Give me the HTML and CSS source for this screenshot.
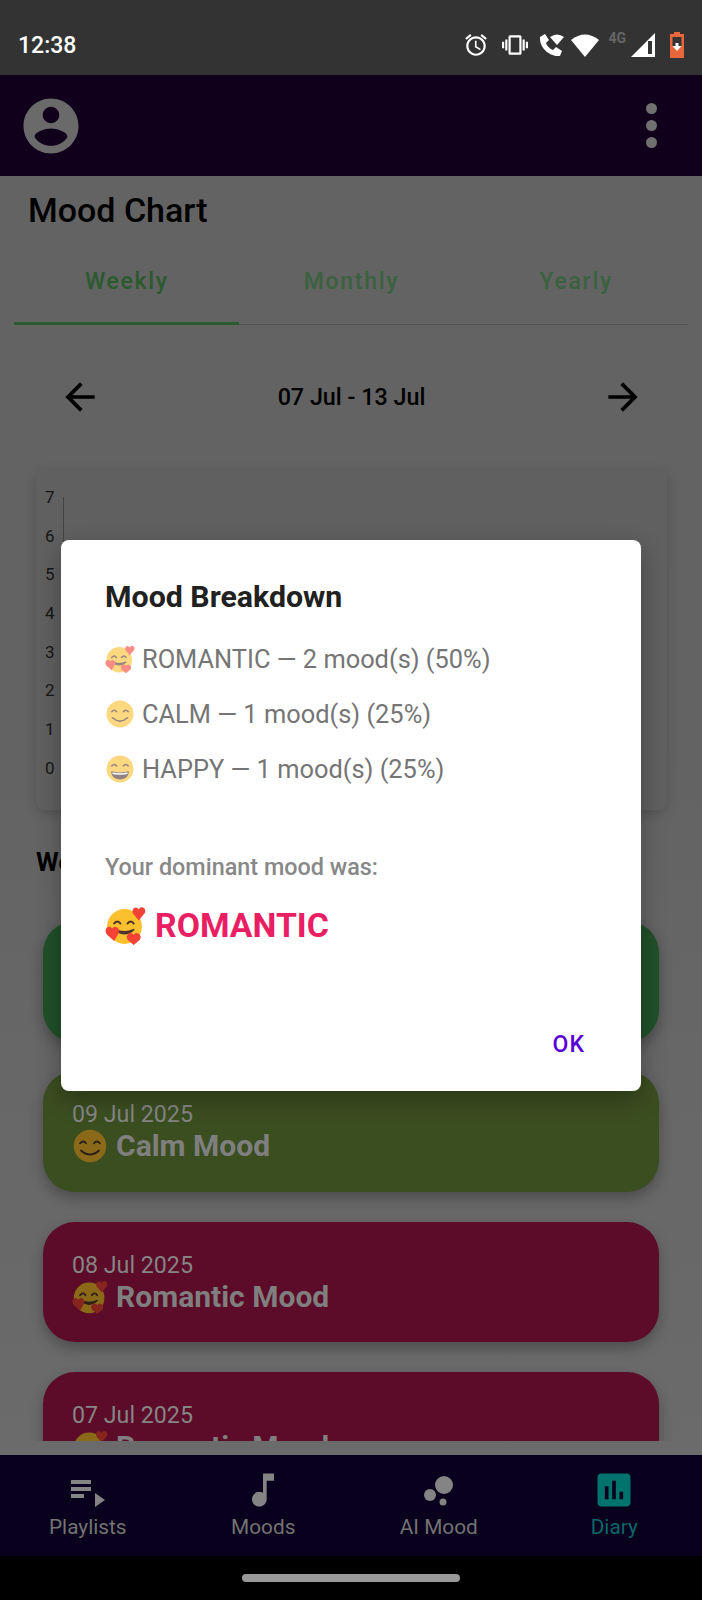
FILE: index.html
```html
<!DOCTYPE html>
<html lang="en">
<head>
	<meta charset="UTF-8">
	<title>Mood Chart</title>
	<link rel="stylesheet" href="styles.css">
</head>
<body>
	<svg class="defs" width="0" height="0">
		<defs>
			<symbol id="face-love" viewBox="0 0 40 40">
				<circle cx="19" cy="21" r="17" fill="#fbc02d"/>
				<path d="M9 18q3.500-4 6 0M22 18q3.500-4 6 0" fill="none" stroke="#4e342e" stroke-width="2" stroke-linecap="round"/>
				<path d="M10 24q9 8 18 0q-9 4-18 0z" fill="#4e342e" stroke="#4e342e" stroke-width="1.500" stroke-linejoin="round"/>
				<path d="M33 15l-6-7q-1-5 3-5.500q2 0 3 2q1-3 4-2q3 1 2 5z" fill="#f44336"/>
				<path d="M9 35l-7-6q-3-4 0-7q3-2 5 1q2-3 5-1q3 2 1 6z" fill="#f44336"/>
				<path d="M28 39l-6-5q-2-4 1-6q3-2 5 1q2-3 5-1q3 2 1 6z" fill="#f44336"/>
			</symbol>
			<symbol id="face-calm" viewBox="0 0 40 40">
				<circle cx="20" cy="20" r="18" fill="#fbc02d"/>
				<path d="M9 17q3.500-4 6.500 0M24.500 17q3-4 6.500 0" fill="none" stroke="#4e342e" stroke-width="2" stroke-linecap="round"/>
				<path d="M10 25q10 9 20 0" fill="none" stroke="#4e342e" stroke-width="2" stroke-linecap="round"/>
			</symbol>
			<symbol id="face-happy" viewBox="0 0 40 40">
				<circle cx="20" cy="20" r="18" fill="#fbc02d"/>
				<path d="M9 16q3.500-4 6.500 0M24.500 16q3-4 6.500 0" fill="none" stroke="#4e342e" stroke-width="2" stroke-linecap="round"/>
				<path d="M8 23q12 3 24 0q-1 11-12 11t-12-11z" fill="#4e342e"/>
				<path d="M10 24.500q10 2 20 0v2q-10 2-20 0z" fill="#fff"/>
			</symbol>
		</defs>
	</svg>

	<div class="status">
		<span class="clock">12:38</span>
		<div class="status-icons">
			<svg class="s-alarm" viewBox="0 0 24 24"><path d="M22 5.720l-4.600-3.860-1.290 1.530 4.600 3.860L22 5.720zM7.880 3.390L6.600 1.860 2 5.710l1.290 1.530 4.590-3.850zM12.500 8H11v6l4.750 2.850.75-1.230-4-2.370V8zM12 4c-4.970 0-9 4.030-9 9s4.020 9 9 9c4.970 0 9-4.030 9-9s-4.030-9-9-9zm0 16c-3.870 0-7-3.130-7-7s3.130-7 7-7 7 3.130 7 7-3.130 7-7 7z"/></svg>
			<svg class="s-vib" viewBox="0 0 24 24"><path d="M0 15h2V9H0v6zm3 2h2V7H3v10zm19-8v6h2V9h-2zm-3 8h2V7h-2v10zM16.500 3h-9C6.670 3 6 3.670 6 4.500v15c0 .83.670 1.500 1.500 1.500h9c.83 0 1.500-.67 1.500-1.500v-15c0-.83-.67-1.500-1.500-1.500zM16 19H8V5h8v14z"/></svg>
			<svg class="s-call" viewBox="0 0 26 26"><path d="M1 5l5-3 4 6-3 3c1 3 4 6 7 7l3-3 6 4-2 5C10 25 0 15 1 5z"/><path d="M11 5q7-5 14 0l-7 8z"/></svg>
			<svg class="s-wifi" viewBox="0 0 28 24"><path d="M14 24L0 7q14-11 28 0z"/></svg>
			<span class="net">4G</span>
			<svg class="s-signal" viewBox="0 0 24 24"><path d="M24 0v24H0z"/><path class="cut" d="M17 8h4v13h-4z"/></svg>
			<svg class="s-batt" viewBox="0 0 16 26"><path class="orange" d="M5 0h6v2h4v24H1V2h4z"/><path class="cut" d="M3.500 5h9v9h-9z"/><path d="M6.500 11h3v3h3l-4.500 5-4.500-5h3z"/></svg>
		</div>
	</div>

	<div class="appbar">
		<svg class="avatar" viewBox="0 0 24 24"><path d="M12 2C6.480 2 2 6.480 2 12s4.480 10 10 10 10-4.480 10-10S17.520 2 12 2zm0 3c1.660 0 3 1.340 3 3s-1.340 3-3 3-3-1.340-3-3 1.340-3 3-3zm0 14.200c-2.500 0-4.710-1.280-6-3.220.03-1.990 4-3.080 6-3.080 1.990 0 5.970 1.090 6 3.080-1.290 1.940-3.500 3.220-6 3.220z"/></svg>
		<div class="menu"><i></i><i></i><i></i></div>
	</div>

	<div class="content">
		<h1 class="page-title">Mood Chart</h1>
		<div class="tabs">
			<div class="tab active">Weekly</div>
			<div class="tab">Monthly</div>
			<div class="tab">Yearly</div>
		</div>
		<div class="range">
			<svg class="arrow" viewBox="0 0 24 24"><path d="M20 11H7.830l5.590-5.590L12 4l-8 8 8 8 1.410-1.410L7.830 13H20v-2z"/></svg>
			<span class="range-text">07 Jul - 13 Jul</span>
			<svg class="arrow" viewBox="0 0 24 24"><path d="M4 11h12.170l-5.590-5.590L12 4l8 8-8 8-1.410-1.410L16.170 13H4v-2z"/></svg>
		</div>
		<div class="chart">
			<div class="y-labels">
				<span>7</span><span>6</span><span>5</span><span>4</span><span>3</span><span>2</span><span>1</span><span>0</span>
			</div>
			<div class="y-axis"></div>
		</div>
		<h2 class="week-title">Weekly Moods</h2>
		<div class="entries">
			<div class="entry green"></div>
			<div class="entry lime">
				<div class="entry-date">09 Jul 2025</div>
				<div class="entry-name"><svg class="emoji-card"><use href="#face-calm"/></svg>Calm Mood</div>
			</div>
			<div class="entry pink">
				<div class="entry-date">08 Jul 2025</div>
				<div class="entry-name"><svg class="emoji-card"><use href="#face-love"/></svg>Romantic Mood</div>
			</div>
			<div class="entry pink">
				<div class="entry-date">07 Jul 2025</div>
				<div class="entry-name"><svg class="emoji-card"><use href="#face-love"/></svg>Romantic Mood</div>
			</div>
		</div>
	</div>

	<div class="bottomnav">
		<div class="nav-item">
			<svg class="nav-icon" viewBox="0 0 44 44"><path d="M5 12h20v4H5zM5 19h20v4H5zM5 26h13v4H5zM29 25l10 7-10 7z"/></svg>
			<span>Playlists</span>
		</div>
		<div class="nav-item">
			<svg class="nav-icon" viewBox="0 0 24 24"><path d="M12 3v10.550c-.59-.34-1.270-.55-2-.55-2.210 0-4 1.790-4 4s1.790 4 4 4 4-1.790 4-4V7h4V3h-6z"/></svg>
			<span>Moods</span>
		</div>
		<div class="nav-item">
			<svg class="nav-icon" viewBox="0 0 44 44"><circle cx="27" cy="17" r="9"/><circle cx="13" cy="27" r="6"/><circle cx="26" cy="34" r="3.500"/></svg>
			<span>AI Mood</span>
		</div>
		<div class="nav-item selected">
			<svg class="nav-icon" viewBox="0 0 24 24"><path d="M19 3H5c-1.100 0-2 .9-2 2v14c0 1.100.9 2 2 2h14c1.100 0 2-.9 2-2V5c0-1.100-.9-2-2-2zM9 17H7v-7h2v7zm4 0h-2V7h2v10zm4 0h-2v-4h2v4z"/></svg>
			<span>Diary</span>
		</div>
	</div>
	<div class="sysbar"><div class="pill"></div></div>

	<div class="dialog">
		<h3 class="dialog-title">Mood Breakdown</h3>
		<div class="line first"><svg class="emoji"><use href="#face-love"/></svg>ROMANTIC — 2 mood(s) (50%)</div>
		<div class="line"><svg class="emoji"><use href="#face-calm"/></svg>CALM — 1 mood(s) (25%)</div>
		<div class="line"><svg class="emoji"><use href="#face-happy"/></svg>HAPPY — 1 mood(s) (25%)</div>
		<div class="dominant-label">Your dominant mood was:</div>
		<div class="dominant"><svg class="emoji-big"><use href="#face-love"/></svg>ROMANTIC</div>
		<div class="actions"><span class="ok">OK</span></div>
	</div>
</body>
</html>
```

FILE: styles.css
```css
* {
	box-sizing: border-box;
}
body {
	margin: 0;
	width: 702px;
	height: 1600px;
	position: relative;
	overflow: hidden;
	font-family: Roboto, "Liberation Sans", sans-serif;
	background-color: #000;
}
.defs {
	position: absolute;
}

/* status bar */
.status {
	height: 75px;
	background-color: #333;
	display: flex;
	align-items: center;
	justify-content: space-between;
	padding: 15px 17px 0 18px;
	color: #fff;
}
.clock {
	font-size: 23px;
	font-weight: 500;
}
.status-icons {
	display: flex;
	align-items: center;
}
.status-icons svg {
	fill: #fff;
	display: block;
}
.status-icons .cut {
	fill: #333;
}
.status-icons .orange {
	fill: #e8663c;
}
.s-alarm {
	width: 26px;
	height: 26px;
}
.s-vib {
	width: 26px;
	height: 26px;
	margin-left: 13px;
}
.s-call {
	width: 26px;
	height: 26px;
	margin-left: 11px;
}
.s-wifi {
	width: 28px;
	height: 24px;
	margin-left: 6px;
}
.net {
	font-size: 14px;
	font-weight: 700;
	color: #666;
	margin: 0 5px 0 9px;
	position: relative;
	top: -7px;
}
.s-signal {
	width: 24px;
	height: 24px;
}
.s-batt {
	width: 16px;
	height: 26px;
	margin-left: 14px;
}

/* app bar */
.appbar {
	height: 101px;
	background-color: #10001c;
	display: flex;
	align-items: center;
	justify-content: space-between;
	padding: 0 45px 0 18px;
}
.avatar {
	width: 66px;
	height: 66px;
	fill: #6a6a6a;
}
.menu {
	display: flex;
	flex-direction: column;
	gap: 6px;
}
.menu i {
	display: block;
	width: 11px;
	height: 11px;
	border-radius: 50%;
	background-color: #707070;
}

/* page behind the dialog */
.content {
	height: 1279px;
	background: linear-gradient(#636363 0, #636363 45%, #6b6b6b 100%);
	overflow: hidden;
}
.page-title {
	margin: 0;
	padding: 14px 0 0 28px;
	height: 75px;
	font-size: 34px;
	line-height: 40px;
	font-weight: 500;
	color: #000;
}
.tabs {
	display: flex;
	margin: 0 14px;
	height: 74px;
	border-bottom: 1px solid #565656;
}
.tab {
	flex: 1;
	text-align: center;
	padding: 17px 0 0 1px;
	font-size: 23px;
	line-height: 28px;
	font-weight: 500;
	letter-spacing: 1.700px;
	color: #3a623f;
}
.tab.active {
	color: #2a5a2e;
	border-bottom: 3px solid #2a5a2e;
	height: 74px;
}
.range {
	display: flex;
	align-items: center;
	justify-content: space-between;
	padding: 22px 57px 0 58px;
	height: 122px;
}
.arrow {
	width: 44px;
	height: 44px;
	fill: #000;
}
.range-text {
	font-size: 23.300px;
	font-weight: 500;
	color: #000;
}
.chart {
	margin: 23px 35px 0 36px;
	height: 340px;
	background-color: #606060;
	border-radius: 8px;
	box-shadow: 0 3px 12px rgba(0, 0, 0, .18);
	display: flex;
	padding: 8px 0 0 9px;
}
.y-labels {
	width: 18px;
}
.y-labels span {
	display: block;
	height: 38.700px;
	line-height: 38.700px;
	font-size: 17px;
	color: #161616;
}
.y-axis {
	margin-top: 19px;
	height: 270px;
	border-left: 1px solid #444;
}
.week-title {
	margin: 38px 0 0 36px;
	font-size: 26px;
	line-height: 28px;
	font-weight: 700;
	color: #000;
}
.entries {
	margin-top: 0;
	padding: 45px 43px 0;
	height: 565px;
	overflow: hidden;
}
.entry {
	height: 120.500px;
	margin-bottom: 29.800px;
	border-radius: 32px;
	padding: 30px 29px 0;
	box-shadow: 0 6px 14px rgba(0, 0, 0, .28);
}
.green {
	background-color: #20502a;
}
.lime {
	background-color: #3b4e20;
}
.pink {
	background-color: #5c0c28;
}
.entry-date {
	font-size: 23.200px;
	line-height: 26px;
	color: #858585;
}
.entry-name {
	display: flex;
	align-items: center;
	font-size: 30px;
	line-height: 38px;
	font-weight: 700;
	color: #7f7f7f;
}
.emoji-card {
	width: 36px;
	height: 36px;
	margin-right: 8px;
	filter: brightness(.55);
}

/* bottom navigation */
.bottomnav {
	height: 101px;
	background-color: #08001c;
	display: flex;
}
.nav-item {
	flex: 1;
	display: flex;
	flex-direction: column;
	align-items: center;
	padding-top: 13px;
	font-size: 20.800px;
	line-height: 26px;
	color: #737373;
}
.nav-icon {
	width: 44px;
	height: 44px;
	fill: #848484;
	margin-bottom: 2px;
}
.nav-item.selected {
	color: #0c6669;
}
.nav-item.selected .nav-icon {
	fill: #00736c;
}
.sysbar {
	height: 44px;
	display: flex;
	justify-content: center;
	padding-top: 18px;
	background-color: #000;
}
.pill {
	width: 218px;
	height: 8px;
	border-radius: 4px;
	background-color: #999;
}

/* dialog */
.dialog {
	position: absolute;
	left: 61px;
	top: 540px;
	width: 580px;
	height: 551px;
	padding: 39px 44px 33px;
	background-color: #fff;
	border-radius: 8px;
	display: flex;
	flex-direction: column;
	box-shadow: 0 8px 24px rgba(0, 0, 0, .3);
}
.dialog-title {
	margin: 0;
	font-size: 30.300px;
	line-height: 35px;
	font-weight: 700;
	color: #212121;
}
.line {
	display: flex;
	align-items: center;
	margin-top: 22px;
	height: 33px;
	font-size: 25.400px;
	color: #757575;
}
.line.first {
	margin-top: 28px;
}
.emoji {
	width: 30px;
	height: 30px;
	margin-right: 7px;
	opacity: .6;
}
.dominant-label {
	margin-top: 69px;
	font-size: 23.400px;
	line-height: 26px;
	font-weight: 500;
	color: #888;
}
.dominant {
	display: flex;
	align-items: center;
	margin-top: 25px;
	height: 40px;
	font-size: 33.800px;
	font-weight: 700;
	color: #e91e63;
}
.emoji-big {
	width: 41px;
	height: 41px;
	margin-right: 9px;
}
.actions {
	margin-top: auto;
	text-align: right;
	padding-right: 12px;
}
.ok {
	font-size: 23px;
	line-height: 26px;
	font-weight: 500;
	letter-spacing: 1px;
	color: #5a00d6;
}
```
